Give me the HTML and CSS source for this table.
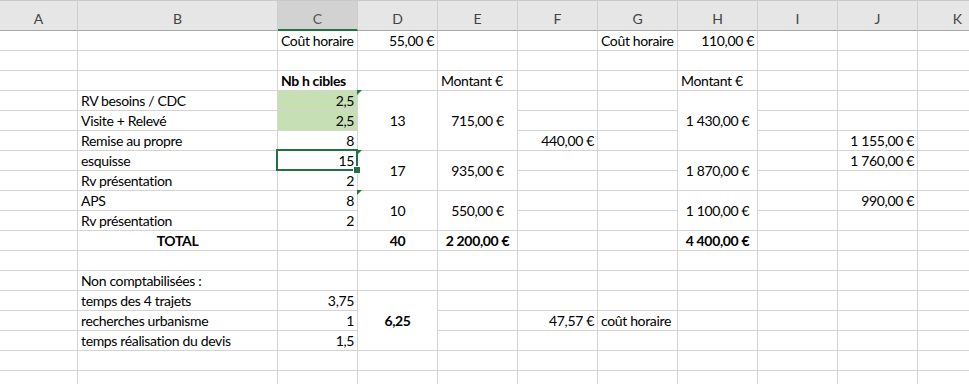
FILE: index.html
```html
<!DOCTYPE html>
<html lang="fr">
<head>
<meta charset="utf-8">
<title>Feuille</title>
<link rel="stylesheet" href="styles.css">
</head>
<body>
<div class="sheet">
  <div class="hd">A</div><div class="hd">B</div><div class="hd sel">C</div><div class="hd">D</div><div class="hd">E</div><div class="hd">F</div><div class="hd">G</div><div class="hd">H</div><div class="hd">I</div><div class="hd">J</div><div class="hd last">K</div>

  <!-- row 1 -->
  <div class="c"></div><div class="c"></div><div class="c">Coût horaire</div><div class="c r">55,00 €</div><div class="c"></div><div class="c"></div><div class="c">Coût horaire</div><div class="c r">110,00 €</div><div class="c"></div><div class="c"></div><div class="c"></div>
  <!-- row 2 -->
  <div class="c"></div><div class="c"></div><div class="c"></div><div class="c"></div><div class="c"></div><div class="c"></div><div class="c"></div><div class="c"></div><div class="c"></div><div class="c"></div><div class="c"></div>
  <!-- row 3 -->
  <div class="c"></div><div class="c"></div><div class="c b">Nb h cibles</div><div class="c"></div><div class="c">Montant €</div><div class="c"></div><div class="c"></div><div class="c">Montant €</div><div class="c"></div><div class="c"></div><div class="c"></div>
  <!-- row 4 -->
  <div class="c"></div><div class="c">RV besoins / CDC</div><div class="c r green">2,5</div><div class="c m span3 flag">13</div><div class="c m span3">715,00 €</div><div class="c"></div><div class="c"></div><div class="c m span3">1 430,00 €</div><div class="c"></div><div class="c"></div><div class="c"></div>
  <!-- row 5 -->
  <div class="c"></div><div class="c">Visite + Relevé</div><div class="c r green">2,5</div><div class="c"></div><div class="c"></div><div class="c"></div><div class="c"></div><div class="c"></div>
  <!-- row 6 -->
  <div class="c"></div><div class="c">Remise au propre</div><div class="c r">8</div><div class="c r">440,00 €</div><div class="c"></div><div class="c"></div><div class="c r">1 155,00 €</div><div class="c"></div>
  <!-- row 7 -->
  <div class="c"></div><div class="c">esquisse</div><div class="c r active">15</div><div class="c m span2 flag">17</div><div class="c m span2">935,00 €</div><div class="c"></div><div class="c"></div><div class="c m span2">1 870,00 €</div><div class="c"></div><div class="c r">1 760,00 €</div><div class="c"></div>
  <!-- row 8 -->
  <div class="c"></div><div class="c">Rv présentation</div><div class="c r">2</div><div class="c"></div><div class="c"></div><div class="c"></div><div class="c"></div><div class="c"></div>
  <!-- row 9 -->
  <div class="c"></div><div class="c">APS</div><div class="c r">8</div><div class="c m span2 flag">10</div><div class="c m span2">550,00 €</div><div class="c"></div><div class="c"></div><div class="c m span2">1 100,00 €</div><div class="c"></div><div class="c r">990,00 €</div><div class="c"></div>
  <!-- row 10 -->
  <div class="c"></div><div class="c">Rv présentation</div><div class="c r">2</div><div class="c"></div><div class="c"></div><div class="c"></div><div class="c"></div><div class="c"></div>
  <!-- row 11 -->
  <div class="c"></div><div class="c b ctr">TOTAL</div><div class="c"></div><div class="c b ctr">40</div><div class="c b ctr">2 200,00 €</div><div class="c"></div><div class="c"></div><div class="c b ctr">4 400,00 €</div><div class="c"></div><div class="c"></div><div class="c"></div>
  <!-- row 12 -->
  <div class="c"></div><div class="c"></div><div class="c"></div><div class="c"></div><div class="c"></div><div class="c"></div><div class="c"></div><div class="c"></div><div class="c"></div><div class="c"></div><div class="c"></div>
  <!-- row 13 -->
  <div class="c"></div><div class="c">Non comptabilisées :</div><div class="c"></div><div class="c"></div><div class="c"></div><div class="c"></div><div class="c"></div><div class="c"></div><div class="c"></div><div class="c"></div><div class="c"></div>
  <!-- row 14 -->
  <div class="c"></div><div class="c">temps des 4 trajets</div><div class="c r">3,75</div><div class="c m span3 b">6,25</div><div class="c"></div><div class="c"></div><div class="c"></div><div class="c"></div><div class="c"></div><div class="c"></div><div class="c"></div>
  <!-- row 15 -->
  <div class="c"></div><div class="c">recherches urbanisme</div><div class="c r">1</div><div class="c"></div><div class="c r">47,57 €</div><div class="c">coût horaire</div><div class="c"></div><div class="c"></div><div class="c"></div><div class="c"></div>
  <!-- row 16 -->
  <div class="c"></div><div class="c">temps réalisation du devis</div><div class="c r">1,5</div><div class="c"></div><div class="c"></div><div class="c"></div><div class="c"></div><div class="c"></div><div class="c"></div><div class="c"></div>
  <!-- row 17 -->
  <div class="c"></div><div class="c"></div><div class="c"></div><div class="c"></div><div class="c"></div><div class="c"></div><div class="c"></div><div class="c"></div><div class="c"></div><div class="c"></div><div class="c"></div>
  <!-- row 18 -->
  <div class="c"></div><div class="c"></div><div class="c"></div><div class="c"></div><div class="c"></div><div class="c"></div><div class="c"></div><div class="c"></div><div class="c"></div><div class="c"></div><div class="c"></div>
</div>
</body>
</html>
```

FILE: styles.css
```css
* { box-sizing: border-box; }
html, body { margin: 0; padding: 0; background: #fff; overflow: hidden; }
body {
  font-family: Lato, "Open Sans", "Liberation Sans", sans-serif;
  font-size: 14px;
  color: #000;
}
.sheet {
  display: grid;
  grid-template-columns: 78px 200px repeat(8, 80px) 80px;
  grid-template-rows: 31px repeat(18, 20px);
  width: 969px;
  height: 384px;
  overflow: hidden;
}
.hd {
  background: #e6e6e6;
  border-top: 1px solid #c9c9c9;
  border-bottom: 1px solid #a8a8a8;
  border-right: 1px solid #cdcdcd;
  color: #444;
  font-size: 14px;
  display: flex;
  align-items: center;
  justify-content: center;
  padding-top: 6px;
}
.hd.sel {
  background: #d2d2d2;
  border-bottom: 2px solid #217346;
  color: #555;
}
.c {
  position: relative;
  border-right: 1px solid #d4d4d4;
  border-bottom: 1px solid #d4d4d4;
  padding: 0 3px;
  line-height: 19px;
  letter-spacing: -0.35px;
  white-space: nowrap;
  display: flex;
  align-items: flex-end;
}
.r { justify-content: flex-end; }
.ctr { justify-content: center; }
.b { font-weight: 700; }
.m { align-items: center; justify-content: center; }
.span2 { grid-row: span 2; }
.span3 { grid-row: span 3; }
.green { background: #c6e0b4; }
.flag::before {
  content: "";
  position: absolute;
  left: -1px;
  top: -1px;
  width: 0;
  height: 0;
  border-top: 5px solid #1f7a3a;
  border-right: 5px solid transparent;
}
.active::after {
  content: "";
  position: absolute;
  left: -2px;
  top: -2px;
  right: -1px;
  bottom: -1px;
  border: 2px solid #217346;
  pointer-events: none;
}
.active::before {
  content: "";
  position: absolute;
  right: -4px;
  bottom: -4px;
  width: 6px;
  height: 6px;
  background: #217346;
  border: 1px solid #fff;
  z-index: 2;
}
```
